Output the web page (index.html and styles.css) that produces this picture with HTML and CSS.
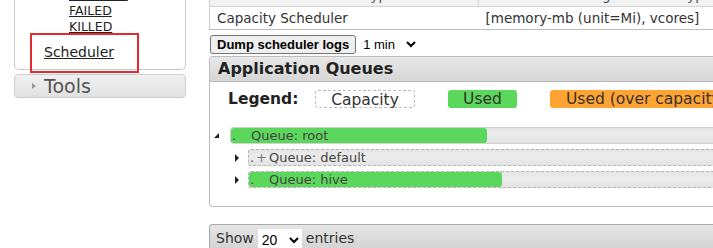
FILE: index.html
```html
<!DOCTYPE html>
<html lang="en">
<head>
  <meta charset="UTF-8" />
  <title>Scheduler</title>
  <link rel="stylesheet" href="styles.css">
</head>
<body>
  <div class="page">
    <aside class="nav">
      <div class="nav-box">
        <ul class="sublist">
          <li><a href="#">FINISHED</a></li>
          <li><a href="#">FAILED</a></li>
          <li><a href="#">KILLED</a></li>
        </ul>
        <div class="nav-item">
          <a href="#">Scheduler</a>
          <span class="mark"></span>
        </div>
      </div>
      <div class="tools"><span class="arrow"></span>Tools</div>
    </aside>

    <main class="content">
      <table class="info">
        <tr>
          <th class="col-type">Scheduler Type</th>
          <th>Scheduling Resource Type</th>
        </tr>
        <tr>
          <td>Capacity Scheduler</td>
          <td>[memory-mb (unit=Mi), vcores]</td>
        </tr>
      </table>

      <div class="dump">
        <button>Dump scheduler logs</button>
        <select>
          <option>1 min</option>
          <option>2 min</option>
          <option>5 min</option>
        </select>
      </div>

      <section class="queues">
        <h3>Application Queues</h3>
        <div class="legend">
          <span class="legend-title">Legend:</span>
          <span class="chip capacity">Capacity</span>
          <span class="chip used">Used</span>
          <span class="chip over">Used (over capacity)</span>
        </div>
        <ul class="tree">
          <li class="node open">
            <span class="toggle"></span>
            <div class="bar solid">
              <div class="fill" style="width: 47.7%"></div>
              <span class="label"><i class="dot">.</i><span class="plus"></span>Queue: root</span>
            </div>
          </li>
          <li class="node child">
            <span class="toggle"></span>
            <div class="bar">
              <span class="label"><i class="dot">.</i><span class="plus">+</span>Queue: default</span>
            </div>
          </li>
          <li class="node child">
            <span class="toggle"></span>
            <div class="bar">
              <div class="fill" style="width: 48.8%"></div>
              <span class="label"><i class="dot">.</i><span class="plus"></span>Queue: hive</span>
            </div>
          </li>
        </ul>
      </section>

      <div class="toolbar">
        Show
        <select class="length">
          <option>20</option>
          <option>50</option>
          <option>100</option>
        </select>
        entries
      </div>
    </main>
  </div>
</body>
</html>
```

FILE: styles.css
```css
html, body {
  margin: 0;
  overflow: hidden;
}
body {
  font-family: "DejaVu Sans", Verdana, sans-serif;
  color: #333;
  background: #fff;
}
.page {
  display: flex;
  gap: 23px;
  padding-left: 14px;
  width: 900px;
}
.nav {
  width: 172px;
  flex: none;
}
.nav-box {
  margin-top: -13px;
  border: 1px solid #c8c8c8;
  border-top: none;
  border-radius: 0 0 5px 5px;
  padding-bottom: 8px;
}
.nav a {
  color: #222;
}
.sublist {
  list-style: none;
  margin: 0;
  padding: 0 0 0 54px;
  font-size: 12.5px;
  line-height: 16px;
}
.nav-item {
  position: relative;
  margin: 8px 0 0 29px;
  font-size: 14px;
  line-height: 18px;
}
.mark {
  position: absolute;
  left: -14px;
  top: -10px;
  width: 105px;
  height: 36px;
  border: 2px solid #e42a2c;
}
.tools {
  margin-top: 4px;
  height: 22px;
  border: 1px solid #cfcfcf;
  border-radius: 4px;
  background: linear-gradient(#f0f0f0, #e2e2e2);
  color: #555;
  font-size: 19px;
  line-height: 22px;
  display: flex;
  align-items: center;
}
.arrow {
  width: 0;
  height: 0;
  margin: 0 8px 0 17px;
  border-left: 4px solid #999;
  border-top: 3px solid transparent;
  border-bottom: 3px solid transparent;
}
.content {
  width: 560px;
  flex: none;
}
.info {
  margin-top: -17px;
  width: 100%;
  border-collapse: collapse;
  border-left: 1px solid #cfcfcf;
  font-size: 13.5px;
}
.info th {
  height: 21px;
  background: #f2f2f2;
  font-weight: normal;
  color: #555;
  border-bottom: 1px solid #d4d4d4;
  text-align: center;
}
.info th.col-type {
  width: 266px;
  border-right: 1px solid #d4d4d4;
}
.info td {
  height: 22px;
  padding: 0 0 0 7px;
  border-bottom: 1px solid #bdbdbd;
  color: #333;
}
.dump {
  margin-top: 5px;
  display: flex;
  align-items: center;
  gap: 3px;
  font-family: "Liberation Sans", Arial, sans-serif;
}
.dump button {
  margin-left: 1px;
  height: 19px;
  padding: 0 6px;
  border: 1px solid #767676;
  border-radius: 3px;
  background: #efefef;
  font-family: "Liberation Sans", Arial, sans-serif;
  font-weight: bold;
  font-size: 13px;
  color: #000;
}
.dump select {
  border: none;
  background: transparent;
  font-family: "Liberation Sans", Arial, sans-serif;
  font-size: 13px;
  color: #000;
  width: 60px;
}
.queues {
  margin-top: 2px;
  border: 1px solid #bdbdbd;
  border-right: none;
  border-radius: 4px 0 0 4px;
  height: 149px;
}
.queues h3 {
  margin: 0;
  height: 24px;
  padding-left: 8px;
  background: linear-gradient(#e8e8e8, #d6d6d6);
  border-bottom: 1px solid #b8b8b8;
  border-radius: 4px 0 0 0;
  font-size: 16px;
  line-height: 24px;
  color: #222;
}
.legend {
  display: flex;
  align-items: center;
  margin-top: 8px;
  padding-left: 18px;
  font-size: 15.5px;
  line-height: 18px;
}
.legend-title {
  flex: none;
  font-weight: bold;
  color: #222;
  width: 87px;
}
.chip {
  flex: none;
  height: 18px;
  line-height: 18px;
  border-radius: 3px;
  text-align: center;
  box-sizing: border-box;
  margin-right: 33px;
}
.capacity {
  width: 100px;
  border: 1px dashed #bbb;
}
.used {
  width: 69px;
  background: #5bd75b;
}
.over {
  width: 200px;
  background: #ffa333;
  text-align: left;
  padding-left: 16px;
  white-space: nowrap;
}
.tree {
  list-style: none;
  margin: 19px 0 0;
  padding: 0;
  font-size: 13px;
}
.node {
  display: flex;
  align-items: center;
  margin-bottom: 5px;
}
.toggle {
  width: 0;
  height: 0;
  margin: 0 11px 0 4px;
  border-right: 5px solid #222;
  border-top: 5px solid transparent;
}
.node.child {
  padding-left: 22px;
}
.node.child .toggle {
  margin: 0 9px 0 3px;
  border-right: none;
  border-left: 4px solid #222;
  border-top: 4px solid transparent;
  border-bottom: 4px solid transparent;
}
.bar {
  position: relative;
  flex: 1;
  height: 17px;
  box-sizing: border-box;
  border: 1px dashed #b5b5b5;
  border-radius: 3px;
  background: linear-gradient(#e4e4e4, #ececec 40%, #e4e4e4);
}
.bar.solid {
  border: 1px solid #d2d2d2;
}
.fill {
  height: 100%;
  background: #5bd75b;
  border-radius: 3px;
}
.label {
  position: absolute;
  left: 1px;
  top: 0;
  line-height: 15px;
  color: #444;
  display: flex;
}
.dot {
  font-style: normal;
  width: 6px;
}
.plus {
  width: 13px;
  color: #777;
}
.toolbar {
  margin-top: 17px;
  height: 26px;
  padding-left: 6px;
  border: 1px solid #aaa;
  border-right: none;
  border-bottom: none;
  border-radius: 4px 0 0 0;
  background: linear-gradient(#e6e6e6, #d2d2d2);
  font-size: 14px;
  line-height: 26px;
  color: #333;
  display: flex;
  align-items: center;
  gap: 4px;
}
.length {
  height: 22px;
  width: 44px;
  margin-top: 3px;
  border: none;
  background: #fff;
  font-family: "Liberation Sans", Arial, sans-serif;
  font-size: 14px;
}
```
